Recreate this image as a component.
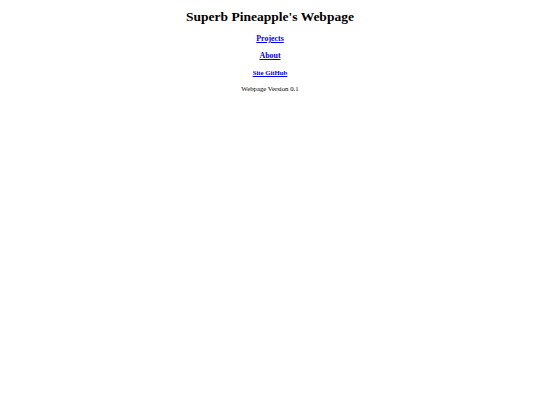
const links = [
  { label: "Projects", size: "h3" },
  { label: "About", size: "h3" },
];

export default function App() {
  return (
    <div className="font-['Liberation_Serif','Times_New_Roman',serif] text-black text-center leading-[normal] pt-px -mt-px">
      <h1 className="text-[13.5px] font-bold my-[9.05px]">Superb Pineapple's Webpage</h1>

      {links.map((l) => (
        <h3 key={l.label} className="text-[7.9px] font-bold my-[7.9px]">
          <a href="#" className="text-[#0000ee] underline">
            {l.label}
          </a>
        </h3>
      ))}

      <h4 className="text-[6.75px] font-bold my-[8.98px]">
        <a href="#" className="text-[#0000ee] underline">
          Site GitHub
        </a>
      </h4>

      <p className="text-[6.75px] my-[6.75px]">Webpage Version 0.1</p>
    </div>
  );
}
